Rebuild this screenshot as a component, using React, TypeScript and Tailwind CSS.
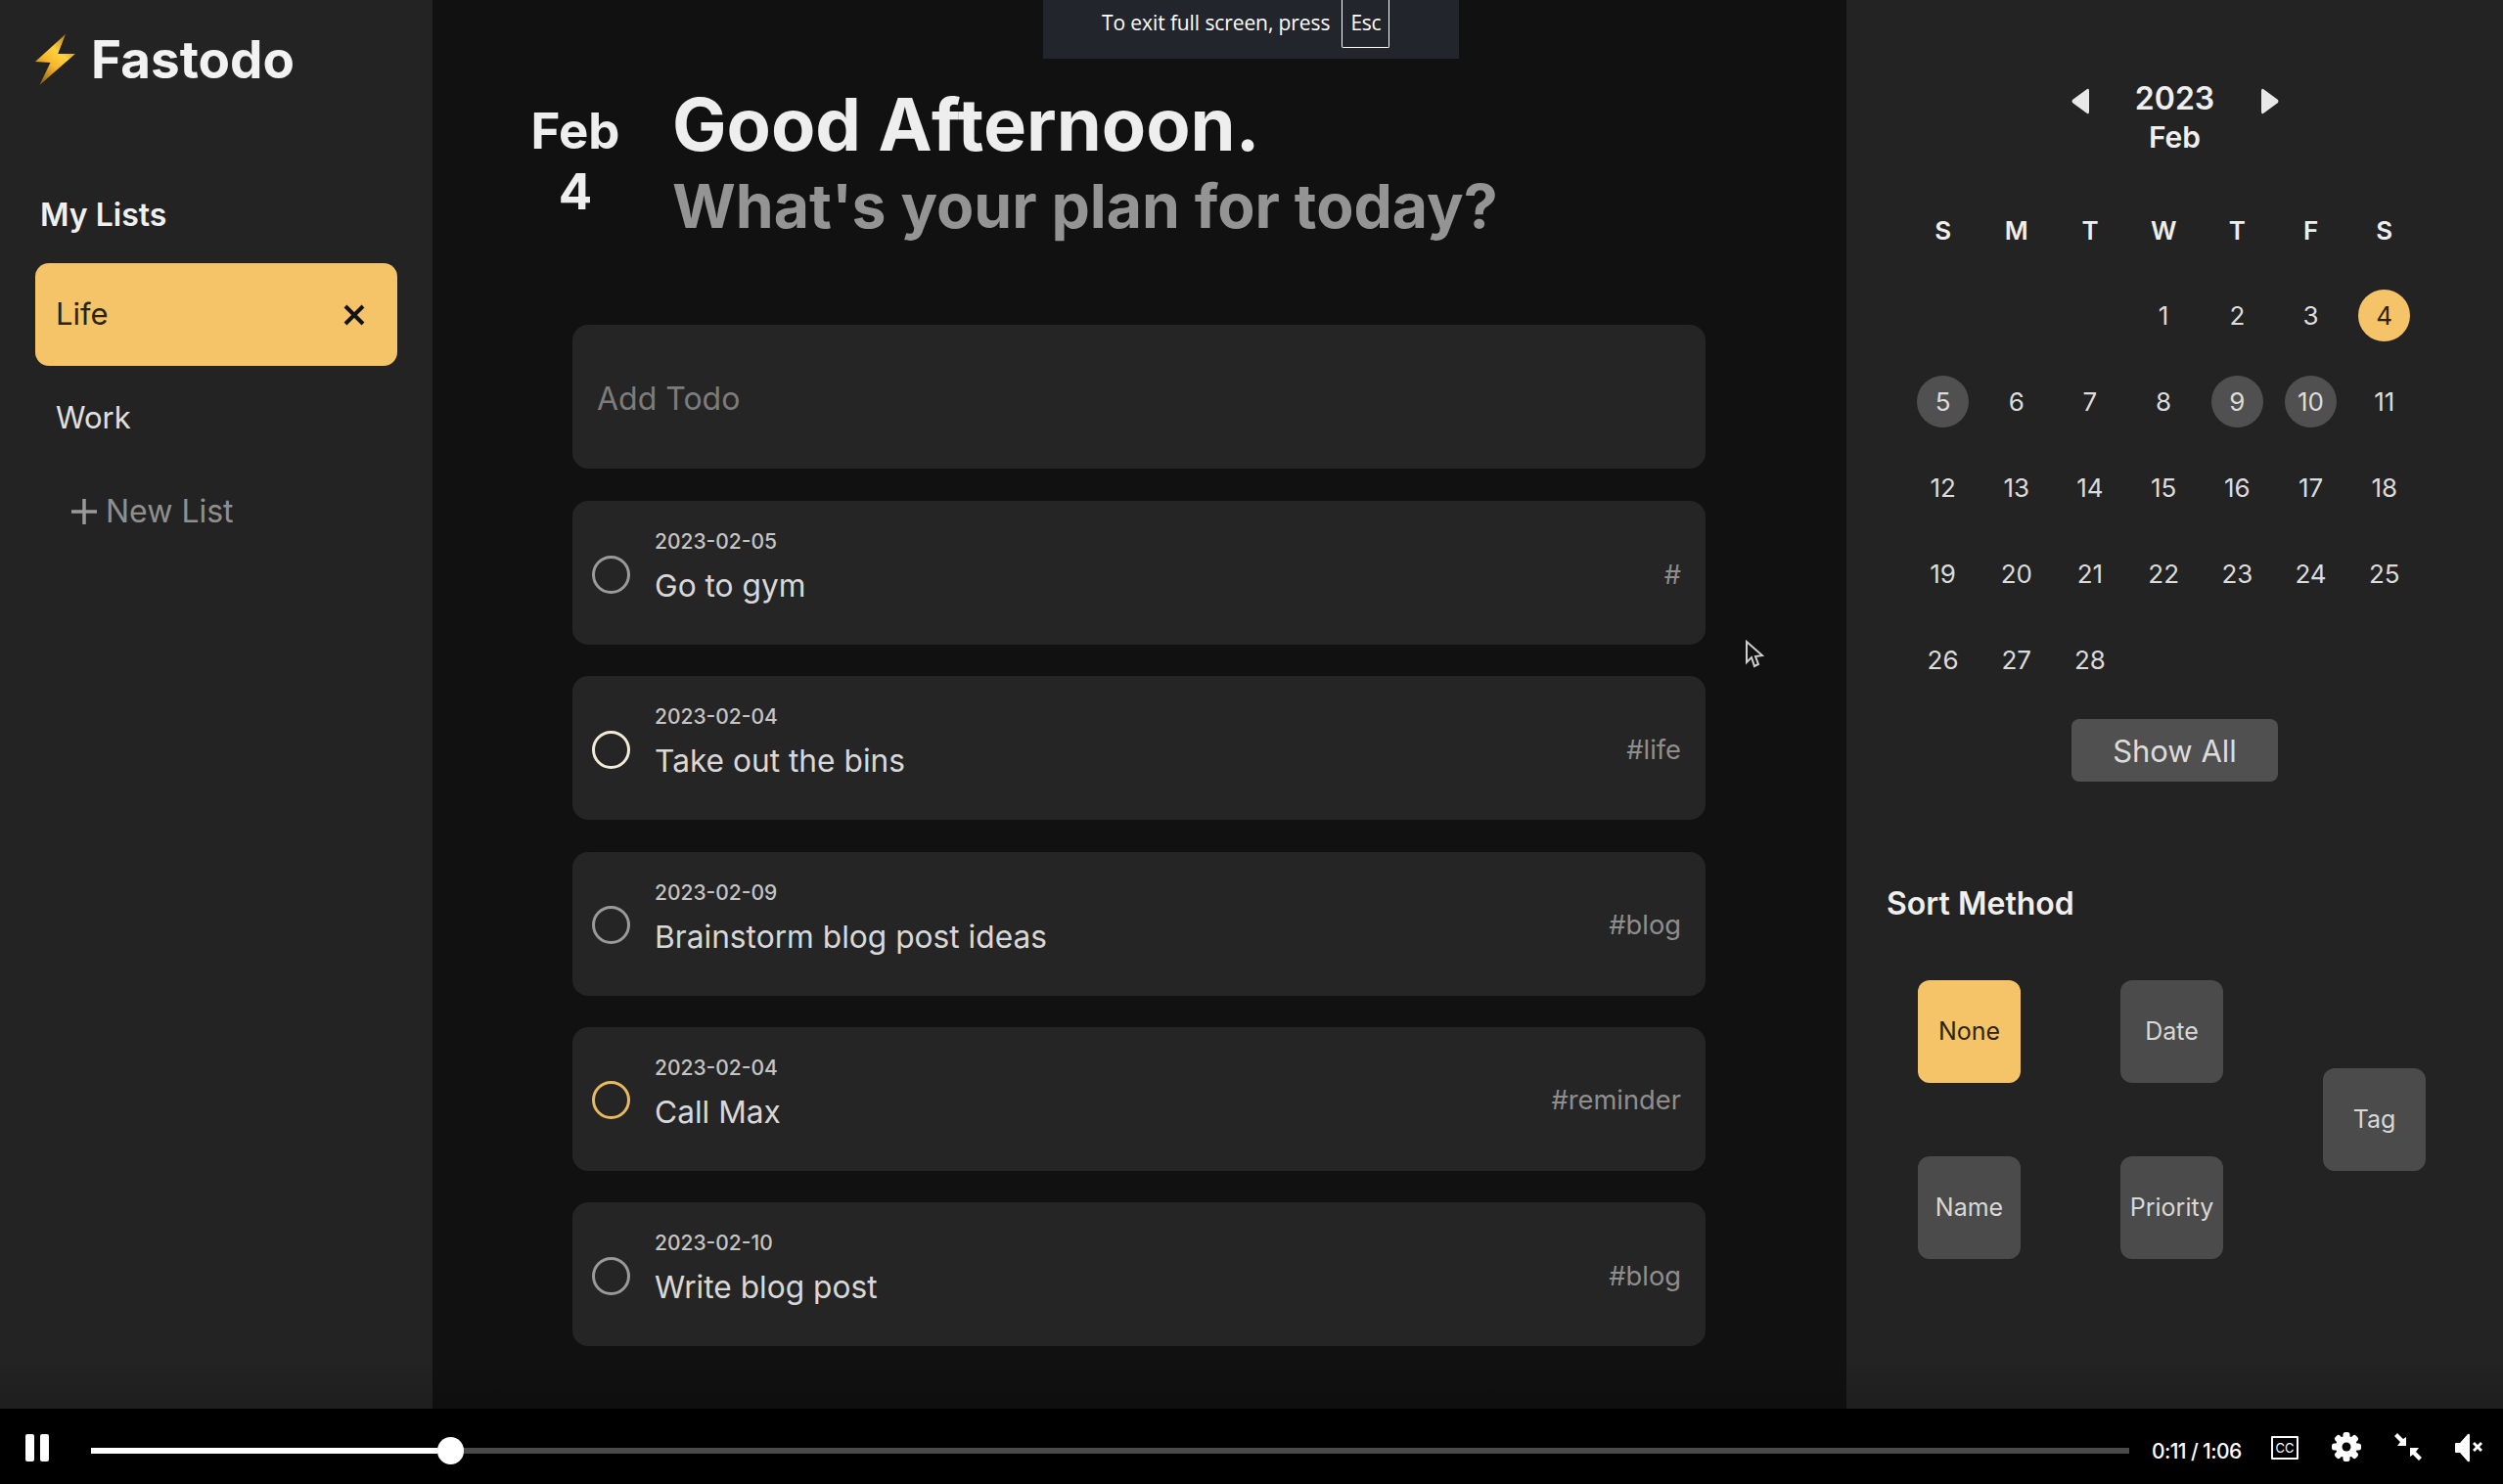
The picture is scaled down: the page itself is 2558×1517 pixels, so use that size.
import React from "react";

const FONT = { fontFamily: "Inter, 'Liberation Sans', sans-serif" };

const todos = [
  { date: "2023-02-05", title: "Go to gym", tag: "#", ring: "border-[#9a9a9a]" },
  { date: "2023-02-04", title: "Take out the bins", tag: "#life", ring: "border-[#f0ecd8]" },
  { date: "2023-02-09", title: "Brainstorm blog post ideas", tag: "#blog", ring: "border-[#9a9a9a]" },
  { date: "2023-02-04", title: "Call Max", tag: "#reminder", ring: "border-[#e8b95f]" },
  { date: "2023-02-10", title: "Write blog post", tag: "#blog", ring: "border-[#9a9a9a]" },
];

const weeks = [
  ["", "", "", "1", "2", "3", "4"],
  ["5", "6", "7", "8", "9", "10", "11"],
  ["12", "13", "14", "15", "16", "17", "18"],
  ["19", "20", "21", "22", "23", "24", "25"],
  ["26", "27", "28", "", "", "", ""],
];

function Bolt() {
  return (
    <svg width="42" height="52" viewBox="0 0 38 52" preserveAspectRatio="none" className="shrink-0">
      <defs>
        <linearGradient id="bolt" x1="0.8" y1="0" x2="0.15" y2="1">
          <stop offset="0" stopColor="#b5771a" />
          <stop offset="0.35" stopColor="#ffd23f" />
          <stop offset="0.6" stopColor="#f7b52c" />
          <stop offset="1" stopColor="#8a5a14" />
        </linearGradient>
      </defs>
      <path d="M28 0 L0 28 L14 29 L4 52 L37 20 L21 20 Z" fill="url(#bolt)" />
    </svg>
  );
}

function Gear() {
  const teeth = [0, 45, 90, 135, 180, 225, 270, 315];
  return (
    <svg width="30" height="30" viewBox="0 0 30 30" className="ml-[34px] mt-[1px]">
      <circle cx="15" cy="15" r="11" fill="#fff" />
      {teeth.map((a) => (
        <rect key={a} x="11.5" y="0" width="7" height="8" rx="2.5" fill="#fff" transform={`rotate(${a} 15 15)`} />
      ))}
      <circle cx="15" cy="15" r="4.5" fill="#000" />
    </svg>
  );
}

function Cell({ d }: { d: string }) {
  const today = d === "4";
  const marked = d === "5" || d === "9" || d === "10";
  return (
    <div className="w-[75.2px] h-[88px] flex items-center justify-center">
      <div
        className={
          today
            ? "w-[53px] h-[53px] rounded-full bg-[#f5c469] text-[#2a2410] flex items-center justify-center"
            : marked
              ? "w-[53px] h-[53px] rounded-full bg-[#505050] text-[#dcdcdc] flex items-center justify-center"
              : "text-[#dcdcdc]"
        }
      >
        {d}
      </div>
    </div>
  );
}

function SortBtn({ label, active }: { label: string; active?: boolean }) {
  return (
    <div
      className={
        active
          ? "w-[105px] h-[105px] rounded-[12px] bg-[#f5c469] text-[#2a2410] flex items-center justify-center text-[25px]"
          : "w-[105px] h-[105px] rounded-[12px] bg-[#4b4b4b] text-[#d8d8d8] flex items-center justify-center text-[25px]"
      }
    >
      {label}
    </div>
  );
}

export default function App() {
  return (
    <div className="relative h-screen w-full overflow-hidden flex flex-col bg-black" style={FONT}>
      <div className="relative flex flex-1 min-h-0">
        {/* left sidebar */}
        <aside className="w-[442px] shrink-0 bg-[#232323] px-[36px] pt-[36px] flex flex-col">
          <div className="h-[50px] flex items-center gap-[15px]">
            <Bolt />
            <span className="text-[53px] font-bold text-[#f2f2f2] leading-none">Fastodo</span>
          </div>
          <div className="mt-[114px] h-[40px] pl-[5px] flex items-center text-[32px] font-semibold text-[#f0f0f0]">My Lists</div>
          <div className="mt-[29px] h-[105px] w-[370px] rounded-[14px] bg-[#f5c469] pl-[21px] pr-[32px] flex items-center justify-between text-[31px] text-[#2a2410]">
            <span>Life</span>
            <svg width="24" height="24" viewBox="0 0 24 24" stroke="#141414" strokeWidth="4">
              <path d="M3 3 L21 21 M21 3 L3 21" />
            </svg>
          </div>
          <div className="h-[105px] pl-[21px] pt-[2px] flex items-center text-[31px] text-[#e0e0e0]">Work</div>
          <div className="h-[86px] pl-[36px] pt-[2px] flex items-center gap-[8px] text-[32px] text-[#8f8f8f]">
            <svg width="28" height="28" viewBox="0 0 28 28" stroke="#9a9a9a" strokeWidth="3.5">
              <path d="M14 1 V27 M1 14 H27" />
            </svg>
            <span>New List</span>
          </div>
        </aside>

        {/* main */}
        <main className="flex-1 min-w-0 bg-[#111111] pl-[143px] pr-[144px] pt-[85px]">
          <div className="flex -ml-[43px] gap-[55px]">
            <div className="pt-[18px] w-[92px] flex flex-col items-center text-[51px] font-bold text-[#eeeeee] leading-[62px]">
              <span>Feb</span>
              <span>4</span>
            </div>
            <div className="-ml-[2px]">
              <h1 className="h-[84px] text-[74px] leading-[84px] font-bold text-[#eeeeee]">Good Afternoon.</h1>
              <h2 className="mt-[5px] h-[72px] text-[62.5px] leading-[72px] font-bold text-[#949494]">What's your plan for today?</h2>
            </div>
          </div>
          <div className="mt-[86px] h-[147px] rounded-[16px] bg-[#252525] pl-[25px] pt-[5px] flex items-center text-[32px] text-[#7c7c7c]">Add Todo</div>
          <div className="mt-[33px] flex flex-col gap-[32.25px]">
            {todos.map((t) => (
              <div key={t.date + t.title} className="h-[147px] rounded-[16px] bg-[#252525] pl-[20px] pr-[25px] flex items-center">
                <div className={"w-[39px] h-[39px] mt-[3px] rounded-full border-[3px] shrink-0 " + t.ring} />
                <div className="ml-[25px] flex-1 self-start pt-[27px]">
                  <div className="h-[30px] leading-[30px] text-[21px] font-medium text-[#c4c4c4]">{t.date}</div>
                  <div className="mt-[12px] h-[36px] leading-[36px] text-[31.7px] text-[#d8d8d8]">{t.title}</div>
                </div>
                <div className="mt-[5px] text-[27.3px] text-[#8e8e8e]">{t.tag}</div>
              </div>
            ))}
          </div>
        </main>

        {/* right panel */}
        <aside className="w-[671px] shrink-0 bg-[#232323] flex flex-col pt-[80px]">
          <div className="h-[80px] flex justify-center gap-[33px]">
            <svg width="18" height="27" viewBox="0 0 18 27" className="mt-[10px]" fill="#e8e8e8">
              <path d="M16 1 Q18 0 18 3 V24 Q18 27 16 26 L1 15 Q0 13.5 1 12 Z" />
            </svg>
            <div className="w-[110px] flex flex-col items-center font-semibold text-[#efefef]">
              <span className="text-[32px] leading-[42px]">2023</span>
              <span className="text-[30px] leading-[36px]">Feb</span>
            </div>
            <svg width="18" height="27" viewBox="0 0 18 27" className="mt-[10px]" fill="#e8e8e8">
              <path d="M2 1 Q0 0 0 3 V24 Q0 27 2 26 L17 15 Q18 13.5 17 12 Z" />
            </svg>
          </div>
          <div className="ml-[61px] mt-[33px] w-[526.4px] text-[26px]">
            <div className="flex h-[85px] font-semibold text-[#eeeeee]">
              {["S", "M", "T", "W", "T", "F", "S"].map((d, i) => (
                <div key={i} className="w-[75.2px] h-[84px] flex items-center justify-center">{d}</div>
              ))}
            </div>
            {weeks.map((w, i) => (
              <div key={i} className="flex">
                {w.map((d, j) => (
                  <Cell key={j} d={d} />
                ))}
              </div>
            ))}
          </div>
          <div className="mt-[17px] self-center w-[211px] h-[64px] pt-[2px] rounded-[8px] bg-[#505050] text-[#dcdcdc] text-[31px] flex items-center justify-center">Show All</div>
          <div className="mt-[107px] ml-[41px] h-[36px] flex items-center text-[32px] font-semibold text-[#efefef]">Sort Method</div>
          <div className="mt-[60px] ml-[73px] flex items-center">
            <div className="grid grid-cols-[105px_105px] gap-x-[102px] gap-y-[75px]">
              <SortBtn label="None" active />
              <SortBtn label="Date" />
              <SortBtn label="Name" />
              <SortBtn label="Priority" />
            </div>
            <div className="ml-[102px]">
              <SortBtn label="Tag" />
            </div>
          </div>
        </aside>
        {/* slight fade just above the player bar */}
        <div className="absolute left-0 right-0 bottom-0 h-[50px] bg-linear-to-t from-black/15 to-transparent" />
      </div>

      {/* video controls */}
      <div className="h-[77px] shrink-0 bg-black flex items-center text-white">
        <div className="ml-[26px] mt-[2px] flex gap-[6px]">
          <div className="w-[9px] h-[28px] rounded-[2px] bg-white" />
          <div className="w-[9px] h-[28px] rounded-[2px] bg-white" />
        </div>
        <div className="ml-[43px] mt-[9px] w-[2083px] h-[6px] bg-[#4a4a4a] flex items-center">
          <div className="w-[354px] h-[6px] bg-white" />
          <div className="w-[27px] h-[28px] rounded-full bg-white shrink-0" />
        </div>
        <div className="ml-[23px] mt-[10px] w-[92px] text-[21px] font-medium whitespace-nowrap tracking-[-0.6px]">0:11 / 1:06</div>
        <div className="ml-[30px] mt-[3px] w-[28px] h-[24px] border-2 border-white rounded-[1px] flex items-center justify-center text-[13px] leading-none">CC</div>
        <Gear />
        <svg width="28" height="28" viewBox="0 0 28 28" className="ml-[34px] mt-[1px]" fill="#fff">
          <path d="M0 3 L3 0 L9 6 L12 4 L12 13 L3 13 L6 9 Z" />
          <path d="M28 25 L25 28 L19 22 L16 24 L16 15 L25 15 L22 19 Z" />
        </svg>
        <svg width="28" height="30" viewBox="0 0 28 30" className="ml-[34px] mt-[3px]" fill="#fff">
          <path d="M1 10 H5 L13 1 Q15 0 15 2 V28 Q15 30 13 29 L5 20 H1 Q0 20 0 19 V11 Q0 10 1 10 Z" />
          <path d="M18 11 L20 9 L23 12 L26 9 L28 11 L25 14 L28 17 L26 19 L23 16 L20 19 L18 17 L21 14 Z" />
        </svg>
      </div>

      {/* fullscreen hint */}
      <div className="absolute top-0 left-[1066px] w-[425px] h-[60px] bg-[#22262c] text-white text-[21px] flex items-start pl-[60px]" style={{ fontFamily: "'Open Sans', 'Liberation Sans', sans-serif" }}>
        <span className="mt-[8px] tracking-[-0.1px] whitespace-nowrap">To exit full screen, press</span>
        <span className="ml-[12px] h-[49px] w-[49px] text-center border border-t-0 border-white rounded-b-[2px] pt-[8px] tracking-[-0.4px]">Esc</span>
      </div>

      {/* mouse cursor */}
      <svg width="20" height="30" viewBox="0 0 20 30" className="absolute left-[1783px] top-[654px]" fill="#111" stroke="#cfcfcf" strokeWidth="2">
        <path d="M2 2 V23 L7 18 L10 27 L14 25 L11 17 L18 16 Z" />
      </svg>
    </div>
  );
}
